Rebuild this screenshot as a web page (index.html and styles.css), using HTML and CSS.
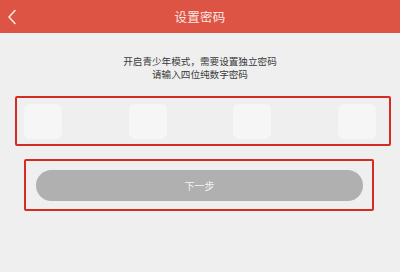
FILE: index.html
```html
<!DOCTYPE html>
<html lang="zh">
<head>
<meta charset="utf-8">
<link rel="stylesheet" href="styles.css">
</head>
<body>
<div class="header">
  <svg class="back" width="20" height="33" viewBox="0 0 20 33"><polyline points="15,10.5 9,17 15,23.5" fill="none" stroke="#fbe6e1" stroke-width="1.6" stroke-linecap="round" stroke-linejoin="round"/></svg>
  <div class="title">设置密码</div>
</div>
<div class="intro">
  <div>开启青少年模式，需要设置独立密码</div>
  <div>请输入四位纯数字密码</div>
</div>
<div class="code-box">
  <div class="cell"></div>
  <div class="cell"></div>
  <div class="cell"></div>
  <div class="cell"></div>
</div>
<div class="btn-box">
  <div class="btn">下一步</div>
</div>
</body>
</html>
```
FILE: styles.css
```css
html, body {
  margin: 0;
  padding: 0;
  background: #efefef;
  font-family: "Noto Sans CJK SC", "Liberation Sans", sans-serif;
  width: 400px;
  height: 272px;
  overflow: hidden;
}
.header {
  height: 33px;
  background: #dd5445;
  display: flex;
  align-items: center;
  justify-content: center;
  position: relative;
}
.back {
  position: absolute;
  left: 0;
  top: 0;
}
.title {
  color: #fbe9e5;
  font-size: 12.5px;
  line-height: 33px;
  letter-spacing: 0.2px;
}
.intro {
  margin-top: 22px;
  text-align: center;
  color: #3a3a3a;
  font-size: 9.6px;
  line-height: 12.5px;
}
.code-box {
  margin: 16px 9px 0 15px;
  height: 46px;
  border: 2px solid #d62b23;
  border-radius: 2px;
  display: flex;
  justify-content: space-between;
  align-items: center;
  padding: 0 13px 0 7px;
}
.cell {
  width: 38px;
  height: 35px;
  background: #f6f6f6;
  border-radius: 6px;
}
.btn-box {
  margin: 13px 26px 0 24px;
  height: 48px;
  border: 2px solid #d62b23;
  border-radius: 2px;
  display: flex;
  align-items: center;
  padding: 0 9px 0 10px;
}
.btn {
  flex: 1;
  height: 31px;
  border-radius: 16px;
  background: #b0b0b0;
  color: #f4f4f4;
  font-size: 10px;
  display: flex;
  align-items: center;
  justify-content: center;
  margin-top: 1px;
}
```
